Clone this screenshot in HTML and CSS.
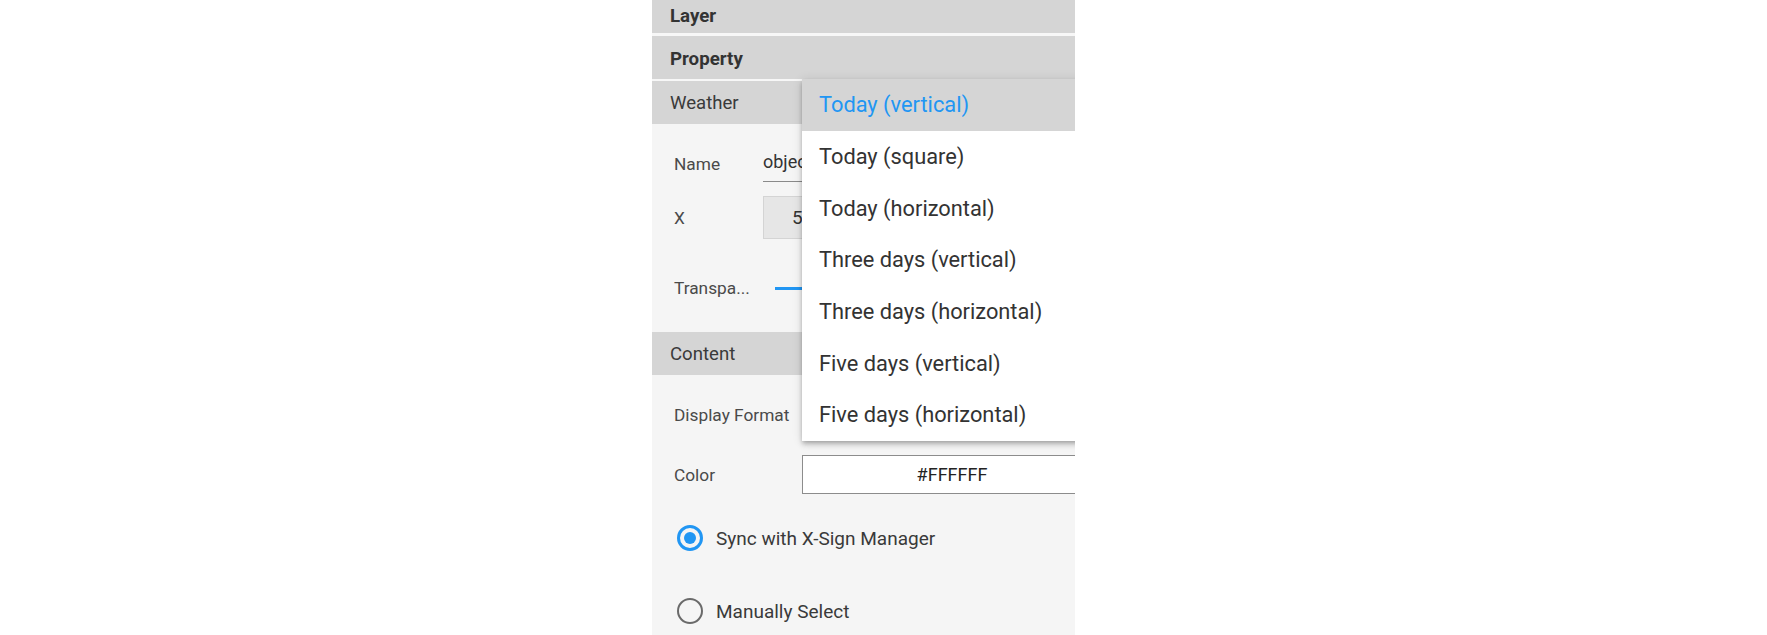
FILE: index.html
```html
<!DOCTYPE html>
<html lang="en">
<head>
<meta charset="utf-8">
<title>Weather Property</title>
<link rel="stylesheet" href="styles.css">
</head>
<body>
<div class="page">
  <aside class="panel">
    <div class="bar bar-main bar-layer">Layer</div>
    <div class="bar bar-main bar-property">Property</div>

    <div class="bar bar-sub">Weather</div>
    <div class="section section-weather">
      <div class="row row-name">
        <span class="label label-narrow">Name</span>
        <div class="text-input">object1</div>
      </div>
      <div class="row row-x">
        <span class="label label-narrow">X</span>
        <div class="num-input">50</div>
      </div>
      <div class="row row-trans">
        <span class="label label-narrow">Transpa...</span>
        <div class="slider"><div class="slider-track"></div></div>
      </div>
    </div>

    <div class="bar bar-sub">Content</div>
    <div class="section section-content">
      <div class="row row-format">
        <span class="label label-wide">Display Format</span>
        <div class="select-trigger"></div>
      </div>
      <div class="row row-color">
        <span class="label label-wide">Color</span>
        <div class="color-input">#FFFFFF</div>
      </div>
      <div class="row row-radio row-radio1">
        <span class="radio radio-on"></span>
        <span class="radio-label">Sync with X-Sign Manager</span>
      </div>
      <div class="row row-radio row-radio2">
        <span class="radio"></span>
        <span class="radio-label">Manually Select</span>
      </div>
    </div>

    <ul class="menu">
      <li class="option option-active">Today (vertical)</li>
      <li class="option">Today (square)</li>
      <li class="option">Today (horizontal)</li>
      <li class="option">Three days (vertical)</li>
      <li class="option">Three days (horizontal)</li>
      <li class="option">Five days (vertical)</li>
      <li class="option">Five days (horizontal)</li>
    </ul>
  </aside>
</div>
</body>
</html>
```

FILE: styles.css
```css
* { box-sizing: border-box; }

html, body {
  margin: 0;
  padding: 0;
  background: #ffffff;
  font-family: Roboto, "Noto Sans", "Liberation Sans", sans-serif;
}

.page {
  display: flex;
  padding-left: 652px;
  height: 635px;
}

.panel {
  position: relative;
  width: 423px;
  height: 635px;
  overflow: hidden;
  background: #f5f5f5;
  display: flex;
  flex-direction: column;
}

.bar {
  display: flex;
  align-items: center;
  padding-left: 18px;
  background: #d5d5d5;
  color: #333333;
  flex: none;
}

.bar-main {
  font-weight: 700;
  font-size: 18.7px;
}

.bar-layer { height: 36px; border-bottom: 3px solid #f7f7f7; padding-bottom: 1px; }
.bar-property { height: 45px; border-bottom: 2px solid #f7f7f7; padding-top: 2px; }

.bar-sub {
  font-size: 18.6px;
  height: 43px;
  color: #3a3a3a;
}

.section { flex: none; }

.section-weather { padding: 19px 0 0 22px; height: 208px; }
.section-content { padding: 19px 0 0 22px; }

.row {
  display: flex;
  align-items: center;
}

.label {
  font-size: 17.3px;
  color: #4a4a4a;
  flex: none;
  white-space: nowrap;
}

.label-narrow { width: 89px; }
.label-wide { width: 128px; }

.row-name { height: 42px; }
.row-x { height: 43px; margin-top: 11px; }
.row-trans { height: 42px; margin-top: 28px; }

.text-input {
  flex: none;
  width: 200px;
  height: 36px;
  border-bottom: 1px solid #8a8a8a;
  font-size: 18px;
  color: #333;
  display: flex;
  align-items: center;
  padding-bottom: 4px;
}

.num-input {
  flex: none;
  width: 200px;
  height: 43px;
  background: #e6e6e6;
  border: 1px solid #d4d4d4;
  font-size: 19px;
  color: #333;
  display: flex;
  align-items: center;
  padding-left: 28px;
}

.slider {
  flex: none;
  width: 250px;
  margin-left: 12px;
  display: flex;
  align-items: center;
}
.slider-track {
  width: 100%;
  height: 3px;
  background: #2196f3;
}

.row-format { height: 42px; }
.select-trigger { flex: none; width: 300px; height: 40px; }

.row-color { height: 39px; margin-top: 19px; }
.color-input {
  flex: none;
  width: 300px;
  height: 39px;
  background: #ffffff;
  border: 1px solid #8c8c8c;
  font-size: 18px;
  color: #222;
  display: flex;
  align-items: center;
  justify-content: center;
}

.row-radio { height: 38px; padding-left: 3px; }
.row-radio1 { margin-top: 25px; }
.row-radio2 { margin-top: 35px; }

.radio {
  width: 26px;
  height: 26px;
  border-radius: 50%;
  border: 2.5px solid #6a6a6a;
  flex: none;
  display: flex;
  align-items: center;
  justify-content: center;
}
.radio-on { border: 3px solid #2196f3; }
.radio-on::after {
  content: "";
  width: 12px;
  height: 12px;
  border-radius: 50%;
  background: #2196f3;
}

.radio-label {
  margin-left: 13px;
  font-size: 19px;
  color: #3a3a3a;
  white-space: nowrap;
}

.menu {
  position: absolute;
  left: 150px;
  top: 79px;
  width: 300px;
  margin: 0;
  padding: 0;
  list-style: none;
  background: #ffffff;
  box-shadow: 0 2px 4px -1px rgba(0,0,0,.2), 0 4px 5px 0 rgba(0,0,0,.14), 0 1px 10px 0 rgba(0,0,0,.12);
}

.option {
  height: 51.7px;
  display: flex;
  align-items: center;
  padding-left: 17px;
  font-size: 21.8px;
  color: #333333;
  white-space: nowrap;
}

.option-active {
  background: #d5d5d5;
  color: #2196f3;
}
```
